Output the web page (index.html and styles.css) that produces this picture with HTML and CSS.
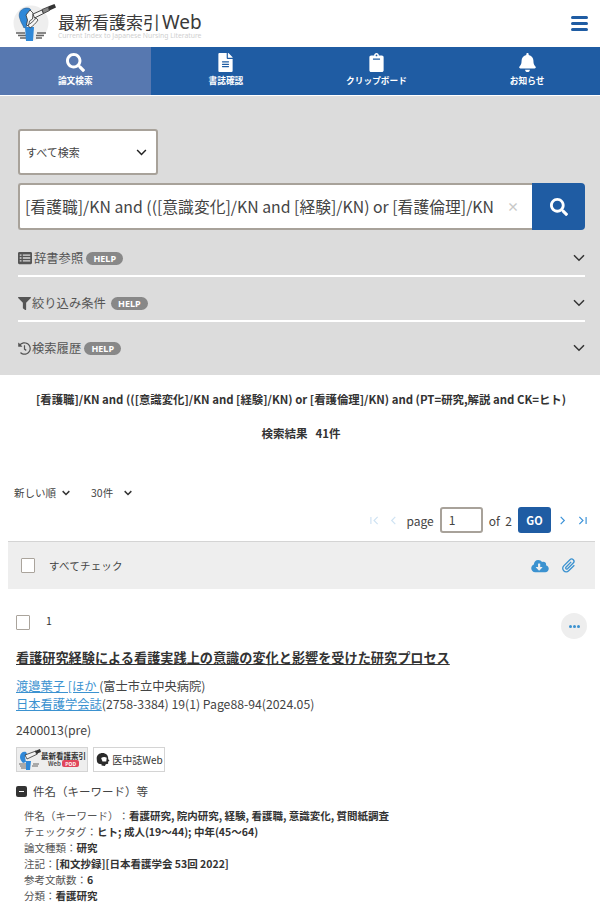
FILE: index.html
```html
<!DOCTYPE html>
<html lang="ja">
<head>
<meta charset="utf-8">
<title>最新看護索引Web</title>
<link rel="stylesheet" href="styles.css">
</head>
<body>
<header class="site-header">
  <div class="logo">
    <svg class="logo-mark" viewBox="0 0 44 44" width="44" height="44">
      <circle cx="18" cy="21" r="17.500" fill="#eeeeee"/>
      <path d="M3 31h9M5 33.500h8M7 36h6M24 31h9M23 33.500h8M23 36h6" stroke="#666" stroke-width="1.300"/>
      <path d="M12 25h9l-1 14h-7z" fill="#2f88d8"/>
      <path d="M7 17c-2-5 0-9 4-10.500 3-1 6-.5 7 1.500l-4 5 1 6-1 5-3 2c-1-3-3-5-4-9z" fill="#2f88d8" stroke="#2c5d8a" stroke-width=".6"/>
      <path d="M13 13l4-5 3 3-.5 6-3 2-1 5-2-1 1-5z" fill="#f8f8f8" stroke="#333" stroke-width=".8"/>
      <path d="M15 23c2-1 6-4 8-7l2 2c-2 3-5 6-8 8z" fill="#f8f8f8" stroke="#333" stroke-width=".8"/>
      <path d="M20 12l9-4 1.500 3.500-9 4.500z" fill="#f4f4f4" stroke="#333" stroke-width=".9"/>
      <path d="M29 7.500l6-2.500 1.500 3.500-6 3z" fill="#888" stroke="#333" stroke-width=".8"/>
      <path d="M35 4.500l6.500-2.500 1.500 3.500-6.500 3z" fill="#333"/>
    </svg>
    <div class="logo-text">
      <div class="logo-title">最新看護索引<span class="logo-web">Web</span></div>
      <div class="logo-sub">Current Index to Japanese Nursing Literature</div>
    </div>
  </div>
  <div class="hamburger"><span></span><span></span><span></span></div>
</header>

<nav class="tabs">
  <a class="tab tab-active">
    <svg viewBox="0 0 512 512" width="19" height="19"><path fill="#fff" d="M505 442.700L405.300 343c-4.500-4.500-10.600-7-17-7H372c27.600-35.300 44-79.700 44-128C416 93.100 322.900 0 208 0S0 93.100 0 208s93.100 208 208 208c48.300 0 92.700-16.400 128-44v16.300c0 6.400 2.500 12.500 7 17l99.700 99.700c9.400 9.400 24.600 9.400 33.900 0l28.300-28.300c9.400-9.400 9.400-24.600.1-34zM208 336c-70.700 0-128-57.200-128-128 0-70.700 57.200-128 128-128 70.700 0 128 57.200 128 128 0 70.700-57.200 128-128 128z"/></svg>
    <span>論文検索</span>
  </a>
  <a class="tab">
    <svg viewBox="0 0 384 512" width="15" height="19"><path fill="#fff" d="M224 136V0H24C10.700 0 0 10.700 0 24v464c0 13.300 10.700 24 24 24h336c13.300 0 24-10.700 24-24V160H248c-13.200 0-24-10.800-24-24zm64 236c0 6.600-5.400 12-12 12H108c-6.600 0-12-5.400-12-12v-8c0-6.600 5.400-12 12-12h168c6.600 0 12 5.400 12 12v8zm0-64c0 6.600-5.400 12-12 12H108c-6.600 0-12-5.400-12-12v-8c0-6.600 5.400-12 12-12h168c6.600 0 12 5.400 12 12v8zm0-72v8c0 6.600-5.400 12-12 12H108c-6.600 0-12-5.400-12-12v-8c0-6.600 5.400-12 12-12h168c6.600 0 12 5.400 12 12zm96-114.100v6.100H256V0h6.100c6.400 0 12.500 2.500 17 7l97.900 98c4.500 4.500 7 10.600 7 16.900z"/></svg>
    <span>書誌確認</span>
  </a>
  <a class="tab">
    <svg viewBox="0 0 384 512" width="15" height="19"><path fill="#fff" d="M336 64h-80c0-35.300-28.700-64-64-64s-64 28.700-64 64H48C21.500 64 0 85.500 0 112v352c0 26.500 21.500 48 48 48h288c26.500 0 48-21.500 48-48V112c0-26.500-21.500-48-48-48zM192 40c13.300 0 24 10.700 24 24s-10.700 24-24 24-24-10.700-24-24 10.700-24 24-24zm96 114v20c0 3.300-2.700 6-6 6H102c-3.300 0-6-2.700-6-6v-20c0-3.300 2.700-6 6-6h180c3.300 0 6 2.700 6 6z"/></svg>
    <span>クリップボード</span>
  </a>
  <a class="tab">
    <svg viewBox="0 0 448 512" width="17" height="19"><path fill="#fff" d="M224 512c35.320 0 63.970-28.650 63.970-64H160.030c0 35.350 28.650 64 63.970 64zm215.390-149.710c-19.320-20.760-55.470-51.990-55.470-154.290 0-77.700-54.480-139.900-127.940-155.160V32c0-17.670-14.320-32-31.980-32s-31.980 14.330-31.980 32v20.840C118.560 68.100 64.080 130.300 64.080 208c0 102.300-36.150 133.530-55.470 154.290-6 6.450-8.660 14.160-8.610 21.710.11 16.400 12.980 32 32.100 32h383.800c19.120 0 32-15.600 32.100-32 .05-7.550-2.610-15.270-8.610-21.710z"/></svg>
    <span>お知らせ</span>
  </a>
</nav>

<section class="search-panel">
  <div class="select-box">
    <span>すべて検索</span>
    <svg class="chev" viewBox="0 0 12 8" width="11" height="7"><path d="M1 1.200l5 5 5-5" fill="none" stroke="#222" stroke-width="1.700"/></svg>
  </div>
  <div class="search-row">
    <div class="search-input">
      <span class="search-text">[看護職]/KN and (([意識変化]/KN and [経験]/KN) or [看護倫理]/KN</span>
      <span class="clear">×</span>
    </div>
    <button class="search-btn" type="button">
      <svg viewBox="0 0 512 512" width="18" height="18"><path fill="#fff" d="M505 442.700L405.300 343c-4.500-4.500-10.600-7-17-7H372c27.600-35.300 44-79.700 44-128C416 93.100 322.900 0 208 0S0 93.100 0 208s93.100 208 208 208c48.300 0 92.700-16.400 128-44v16.300c0 6.400 2.500 12.500 7 17l99.700 99.700c9.400 9.400 24.600 9.400 33.900 0l28.300-28.300c9.400-9.400 9.400-24.600.1-34zM208 336c-70.700 0-128-57.200-128-128 0-70.700 57.200-128 128-128 70.700 0 128 57.200 128 128 0 70.700-57.200 128-128 128z"/></svg>
    </button>
  </div>
  <div class="acc acc-first">
    <svg class="acc-icon" viewBox="0 0 512 512" width="14" height="14"><path fill="#555" d="M464 32H48C21.500 32 0 53.500 0 80v352c0 26.500 21.500 48 48 48h416c26.500 0 48-21.500 48-48V80c0-26.500-21.500-48-48-48zM128 384H72c-4 0-8-4-8-8v-32c0-4 4-8 8-8h56v48zm0-104H72c-4 0-8-4-8-8v-32c0-4 4-8 8-8h56v48zm0-104H72c-4 0-8-4-8-8v-32c0-4 4-8 8-8h56v48zm320 200c0 4-4 8-8 8H176v-48h264c4 0 8 4 8 8v32zm0-104c0 4-4 8-8 8H176v-48h264c4 0 8 4 8 8v32zm0-104c0 4-4 8-8 8H176v-48h264c4 0 8 4 8 8v32z"/></svg>
    <span class="acc-label">辞書参照</span>
    <span class="help">HELP</span>
    <svg class="acc-chev" viewBox="0 0 12 8" width="12" height="8"><path d="M1 1.200l5 5 5-5" fill="none" stroke="#333" stroke-width="1.500"/></svg>
  </div>
  <div class="acc">
    <svg class="acc-icon narrow" viewBox="0 0 512 512" width="13" height="13"><path fill="#555" d="M487.976 0H24.028C2.710 0-8.047 25.866 7.058 40.971L192 225.941V432c0 7.831 3.821 15.170 10.237 19.662l80 55.980C298.020 518.690 320 507.493 320 487.980V225.941l184.947-184.970C520.021 25.896 509.338 0 487.976 0z"/></svg>
    <span class="acc-label">絞り込み条件</span>
    <span class="help help-wide">HELP</span>
    <svg class="acc-chev" viewBox="0 0 12 8" width="12" height="8"><path d="M1 1.200l5 5 5-5" fill="none" stroke="#333" stroke-width="1.500"/></svg>
  </div>
  <div class="acc acc-last">
    <svg class="acc-icon narrow" viewBox="0 0 512 512" width="13" height="13"><path fill="#555" d="M504 255.532c.252 136.640-111.182 248.372-247.822 248.468-64.014.045-122.373-24.163-166.394-63.942-5.097-4.606-5.300-12.543-.443-17.400l16.920-16.920c4.537-4.537 11.796-4.824 16.586-.555C158.650 437.120 204.980 456 256 456c110.549 0 200-89.468 200-200 0-110.549-89.468-200-200-200-55.240 0-105.190 22.340-141.373 58.627l49.810 49.810c7.560 7.560 2.206 20.485-8.485 20.485H20c-6.627 0-12-5.373-12-12V37.077c0-10.691 12.926-16.045 20.485-8.485l50.432 50.432C123.910 33.990 186.730 8 255.532 8 392.170 8 503.748 118.892 504 255.532zM320.520 334.150l9.680-12.450c5.420-6.970 4.170-17.020-2.810-22.440L280 262.400V144c0-8.840-7.160-16-16-16h-16c-8.840 0-16 7.160-16 16v149.600l68.090 52.960c6.970 5.420 17.010 4.170 22.430-2.810z"/></svg>
    <span class="acc-label">検索履歴</span>
    <span class="help">HELP</span>
    <svg class="acc-chev" viewBox="0 0 12 8" width="12" height="8"><path d="M1 1.200l5 5 5-5" fill="none" stroke="#333" stroke-width="1.500"/></svg>
  </div>
</section>

<section class="result-head">
  <p class="query">[看護職]/KN and (([意識変化]/KN and [経験]/KN) or [看護倫理]/KN) and (PT=研究,解説 and CK=ヒト)</p>
  <p class="count">検索結果&nbsp;&nbsp; 41件</p>
</section>

<div class="sort-row">
  <span class="sort-item">新しい順<svg viewBox="0 0 12 8" width="8" height="6"><path d="M1 1.200l5 5 5-5" fill="none" stroke="#333" stroke-width="2.200"/></svg></span>
  <span class="sort-item sort-count">30件<svg viewBox="0 0 12 8" width="8" height="6"><path d="M1 1.200l5 5 5-5" fill="none" stroke="#333" stroke-width="2.200"/></svg></span>
</div>

<div class="pager">
  <svg class="pg pg-off" viewBox="0 0 10 10" width="9" height="9"><path d="M1 1v8M8.500 1l-4 4 4 4" fill="none" stroke="#cfe3f3" stroke-width="1.300"/></svg>
  <svg class="pg pg-off" viewBox="0 0 10 10" width="9" height="9"><path d="M7 1L3 5l4 4" fill="none" stroke="#cfe3f3" stroke-width="1.300"/></svg>
  <span class="pg-word">page</span>
  <span class="pg-input">1</span>
  <span class="pg-of">of&nbsp; 2</span>
  <span class="go">GO</span>
  <svg class="pg pg-next" viewBox="0 0 10 10" width="9" height="9"><path d="M3 1l4 4-4 4" fill="none" stroke="#3b92d8" stroke-width="1.300"/></svg>
  <svg class="pg" viewBox="0 0 10 10" width="9" height="9"><path d="M1.500 1l4 4-4 4M9 1v8" fill="none" stroke="#3b92d8" stroke-width="1.300"/></svg>
</div>

<div class="check-bar">
  <span class="box"></span>
  <span class="check-all">すべてチェック</span>
  <span class="bar-icons">
    <svg viewBox="0 0 640 512" width="18" height="14"><path fill="#3b92d0" d="M537.600 226.600c4.100-10.700 6.400-22.400 6.400-34.600 0-53-43-96-96-96-19.700 0-38.100 6-53.300 16.200C367 64.200 315.300 32 256 32c-88.400 0-160 71.600-160 160 0 2.700.1 5.400.2 8.100C40.200 219.800 0 273.200 0 336c0 79.500 64.500 144 144 144h368c70.700 0 128-57.300 128-128 0-61.900-44-113.600-102.400-125.400zm-132.900 88.700L299.300 420.700c-6.200 6.200-16.400 6.200-22.600 0L171.300 315.300c-10.100-10.100-2.900-27.300 11.300-27.300H248V176c0-8.800 7.200-16 16-16h48c8.800 0 16 7.200 16 16v112h65.400c14.200 0 21.400 17.200 11.300 27.300z"/></svg>
    <svg viewBox="0 0 24 24" width="16" height="17"><path d="M20 11.500l-8.500 8.500a5.200 5.200 0 0 1-7.400-7.400l9.300-9.300a3.500 3.500 0 0 1 5 5l-8.600 8.600a1.700 1.700 0 0 1-2.400-2.400l7.900-7.900" fill="none" stroke="#3b92d0" stroke-width="2"/></svg>
  </span>
</div>

<article class="record">
  <div class="record-top">
    <span class="box"></span>
    <span class="rec-no">1</span>
    <span class="more"><i></i><i></i><i></i></span>
  </div>
  <h2 class="rec-title">看護研究経験による看護実践上の意識の変化と影響を受けた研究プロセス</h2>
  <p class="rec-line"><a class="link">渡邉葉子 [ほか </a>(富士市立中央病院)</p>
  <p class="rec-line"><a class="link">日本看護学会誌</a>(2758-3384) 19(1) Page88-94(2024.05)</p>
  <p class="rec-id">2400013(pre)</p>
  <div class="badges">
    <span class="badge badge-a">
      <svg viewBox="0 0 24 22" width="24" height="22"><path d="M1 15h7M2 17h7M3 19h6M15 15h6M14 17h6" stroke="#555" stroke-width=".9"/><path d="M8 12h5l-1 9H8z" fill="#2f88d8"/><path d="M2 8c0-4 3-6 6-5l1 2-2 3 1 5-3 1C3 12 2 10 2 8z" fill="#2f88d8"/><path d="M7 6l11-4 1.500 3L9 10z" fill="#f2f2f2" stroke="#333" stroke-width=".8"/><path d="M17 2l5-2 1 3-5 2z" fill="#333"/></svg>
      <span class="badge-a-text"><b>最新看護索引</b><span class="badge-web">Web <em>POD</em></span></span>
    </span>
    <span class="badge badge-b">
      <svg viewBox="0 0 16 16" width="15" height="15"><path d="M2 8.500C1 4 4 1 8 1c4 0 6.500 3 6 6.500l1.500 2-1.500.5v2.500l-2.500.5-1 2-3.500-.5v-1.500c-3 0-4.500-1-5-3.500z" fill="#2b2b2b"/><path d="M6.500 6.500c2-1.500 4-1.500 6-.5l-.5 4H8z" fill="#fff"/></svg>
      <span>医中誌Web</span>
    </span>
  </div>
  <div class="fold-head">
    <span class="minus"></span>
    <span>件名（キーワード）等</span>
  </div>
  <dl class="meta">
    <div>件名（キーワード）：<b>看護研究, 院内研究, 経験, 看護職, 意識変化, 質問紙調査</b></div>
    <div>チェックタグ：<b>ヒト; 成人(19～44); 中年(45～64)</b></div>
    <div>論文種類：<b>研究</b></div>
    <div>注記：<b>[和文抄録][日本看護学会 53回 2022]</b></div>
    <div>参考文献数：<b>6</b></div>
    <div>分類：<b>看護研究</b></div>
  </dl>
</article>
</body>
</html>
```

FILE: styles.css
```css
* { box-sizing: border-box; }
html, body { margin: 0; padding: 0; }
body {
  width: 600px;
  height: 919px;
  overflow: hidden;
  background: #fff;
  color: #333;
  font-family: "Noto Sans CJK JP", "Noto Sans", sans-serif;
  font-size: 12px;
}
p, h2, dl { margin: 0; }

.site-header {
  height: 47px;
  display: flex;
  align-items: center;
  justify-content: space-between;
  padding: 0 12px 0 13px;
}
.logo { display: flex; align-items: center; }
.logo-mark { flex: none; }
.logo-text { margin-left: 1px; padding-top: 5px; }
.logo-title { height: 20px; font-size: 17px; line-height: 20px; color: #3a3a3a; white-space: nowrap; }
.logo-web { font-family: "Noto Sans", sans-serif; font-size: 19px; line-height: 20px; margin-left: 2px; }
.logo-sub { font-size: 6.800px; line-height: 8px; color: #cfcfcf; white-space: nowrap; font-family: "Noto Sans", sans-serif; }
.hamburger { display: flex; flex-direction: column; gap: 3px; width: 17px; margin-top: -1px; }
.hamburger span { display: block; height: 3px; border-radius: 2px; background: #1f5ca3; }

.tabs {
  height: 49px;
  display: grid;
  grid-template-columns: repeat(4, 150.600px);
  background: #1f5ca3;
  border-bottom: 1px solid #fff;
}
.tab {
  display: flex;
  flex-direction: column;
  align-items: center;
  padding-top: 6px;
  color: #fff;
  font-size: 8.700px;
  font-weight: 700;
  line-height: 13px;
  gap: 2px;
}
.tab svg { display: block; }
.tab-active { background: #5778b0; }

.search-panel {
  height: 279px;
  background: #dcdcdc;
  padding: 33px 15px 0 18px;
}
.select-box {
  width: 140px;
  height: 46px;
  display: flex;
  align-items: center;
  justify-content: space-between;
  padding: 0 9px 0 6px;
  background: #fff;
  border: 2px solid #a8a29a;
  border-radius: 3px;
  font-size: 11px;
  color: #444;
}
.search-row { display: flex; height: 47px; margin-top: 8px; }
.search-input {
  flex: 1;
  display: flex;
  align-items: center;
  justify-content: space-between;
  padding: 0 13px 0 5px;
  background: #fff;
  border: 2px solid #a8a29a;
  border-right: 0;
  border-radius: 3px 0 0 3px;
  color: #444;
  font-size: 15.800px;
  white-space: nowrap;
}
.clear { color: #c8c8c8; font-size: 12px; font-weight: 700; }
.search-btn {
  width: 53px;
  border: 0;
  padding: 0;
  background: #1f5ca3;
  border-radius: 0 4px 4px 0;
  display: flex;
  align-items: center;
  justify-content: center;
}
.acc {
  height: 45px;
  padding-top: 9px;
  display: flex;
  align-items: center;
  border-bottom: 2px solid #fff;
  color: #555;
  font-size: 12.300px;
}
.acc-first { height: 47px; padding-top: 11px; }
.acc-last { border-bottom: 0; padding-top: 7px; }
.acc-icon { flex: none; margin-right: 2px; }
.acc-icon.narrow { margin-right: 1px; }
.acc-label { line-height: 18px; }
.help {
  margin-left: 3px;
  width: 37px;
  height: 13px;
  border-radius: 7px;
  background: #888;
  color: #fff;
  font-family: "Noto Sans", sans-serif;
  font-size: 9px;
  font-weight: 700;
  line-height: 13px;
  text-align: center;
}
.help-wide { margin-left: 5px; }
.acc-chev { margin-left: auto; }

.result-head { text-align: center; padding: 15px 0 0 2px; height: 99px; }
.query { font-size: 11.400px; font-weight: 700; line-height: 18px; color: #333; white-space: nowrap; }
.count { margin-top: 16px; font-size: 11.500px; font-weight: 700; line-height: 18px; }

.sort-row { display: flex; height: 18px; margin-top: 10px; padding-left: 14px; font-size: 10.500px; line-height: 18px; color: #444; }
.sort-item { display: inline-flex; align-items: center; gap: 6px; }
.sort-count { margin-left: 21px; gap: 11px; }

.pager {
  height: 26px;
  margin-top: 5px;
  padding-right: 13px;
  display: flex;
  align-items: center;
  justify-content: flex-end;
  font-size: 12px;
  color: #444;
}
.pg { flex: none; margin-left: 11px; }
.pg-off + .pg-off { margin-left: 10px; }
.pg-word { margin-left: 9px; }
.pg-input {
  width: 43px;
  height: 26px;
  margin-left: 6px;
  padding-left: 7px;
  border: 2px solid #a8a29a;
  border-radius: 3px;
  font-size: 12px;
  line-height: 22px;
}
.pg-of { margin-left: 6px; font-size: 12px; }
.go {
  width: 33px;
  height: 26px;
  margin-left: 6px;
  border-radius: 3px;
  background: #1f5ca3;
  color: #fff;
  font-size: 11px;
  font-weight: 700;
  line-height: 26px;
  text-align: center;
}
.pg-next { margin-left: 7px; }

.check-bar {
  height: 48px;
  margin: 8px 5px 0 8px;
  padding: 0 18px 0 13px;
  display: flex;
  align-items: center;
  background: #eeeeee;
  border-top: 1px solid #d4d4d4;
}
.box {
  flex: none;
  width: 14px;
  height: 15px;
  background: #fff;
  border: 1px solid #aaa49c;
  border-radius: 1px;
}
.check-all { margin-left: 14px; font-size: 10.500px; color: #444; letter-spacing: .2px; }
.bar-icons { margin-left: auto; display: flex; align-items: center; gap: 12px; }

.record { padding: 24px 13px 0 16px; }
.record-top { display: flex; align-items: flex-start; height: 26px; }
.record-top .box { margin-top: 2px; }
.rec-no { margin-left: 16px; font-size: 10.500px; line-height: 16px; color: #333; }
.more {
  margin-left: auto;
  width: 26px;
  height: 26px;
  border-radius: 50%;
  background: #eeeeee;
  display: flex;
  align-items: center;
  justify-content: center;
  gap: 1px;
}
.more i { width: 3px; height: 3px; border-radius: 50%; background: #3b92d0; }
.rec-title {
  margin-top: 9px;
  font-size: 13.160px;
  font-weight: 700;
  line-height: 20px;
  color: #333;
  text-decoration: underline;
  white-space: nowrap;
}
.rec-line { font-size: 12.250px; line-height: 18px; color: #444; white-space: nowrap; }
.rec-title + .rec-line { margin-top: 9px; }
.link { color: #3b92d0; text-decoration: underline; }
.rec-id { margin-top: 8px; font-size: 12.300px; line-height: 18px; color: #444; }
.badges { display: flex; gap: 5px; margin-top: 8px; }
.badge {
  width: 72px;
  height: 25px;
  display: flex;
  align-items: center;
  justify-content: center;
  border: 1px solid #d4d4d4;
  color: #333;
}
.badge-a { background: #eeeeee; padding-left: 0; }
.badge-b { background: #fff; gap: 2px; font-size: 10px; font-weight: 400; }
.badge-a-text { display: flex; flex-direction: column; align-items: center; line-height: 8px; margin-left: -1px; }
.badge-a-text b { font-size: 7.500px; line-height: 8px; font-weight: 700; white-space: nowrap; }
.badge-web { font-size: 6px; font-weight: 700; line-height: 8px; color: #555; }
.badge-web em { font-style: normal; background: #e0455a; color: #fff; border-radius: 2px; padding: 0 3px; font-size: 5px; }

.fold-head {
  display: flex;
  align-items: center;
  gap: 6px;
  margin-top: 8px;
  font-size: 11.500px;
  line-height: 22px;
  color: #444;
  text-spacing-trim: space-all;
}
.minus { position: relative; width: 11px; height: 11px; border-radius: 2px; background: #333; }
.minus::after { content: ""; position: absolute; left: 3px; top: 5px; width: 5px; height: 1.500px; background: #fff; }
.meta { margin-top: 6px; padding-left: 8px; font-size: 10.500px; line-height: 16px; color: #555; text-spacing-trim: space-all; }
.meta b { font-weight: 700; color: #333; }
```
